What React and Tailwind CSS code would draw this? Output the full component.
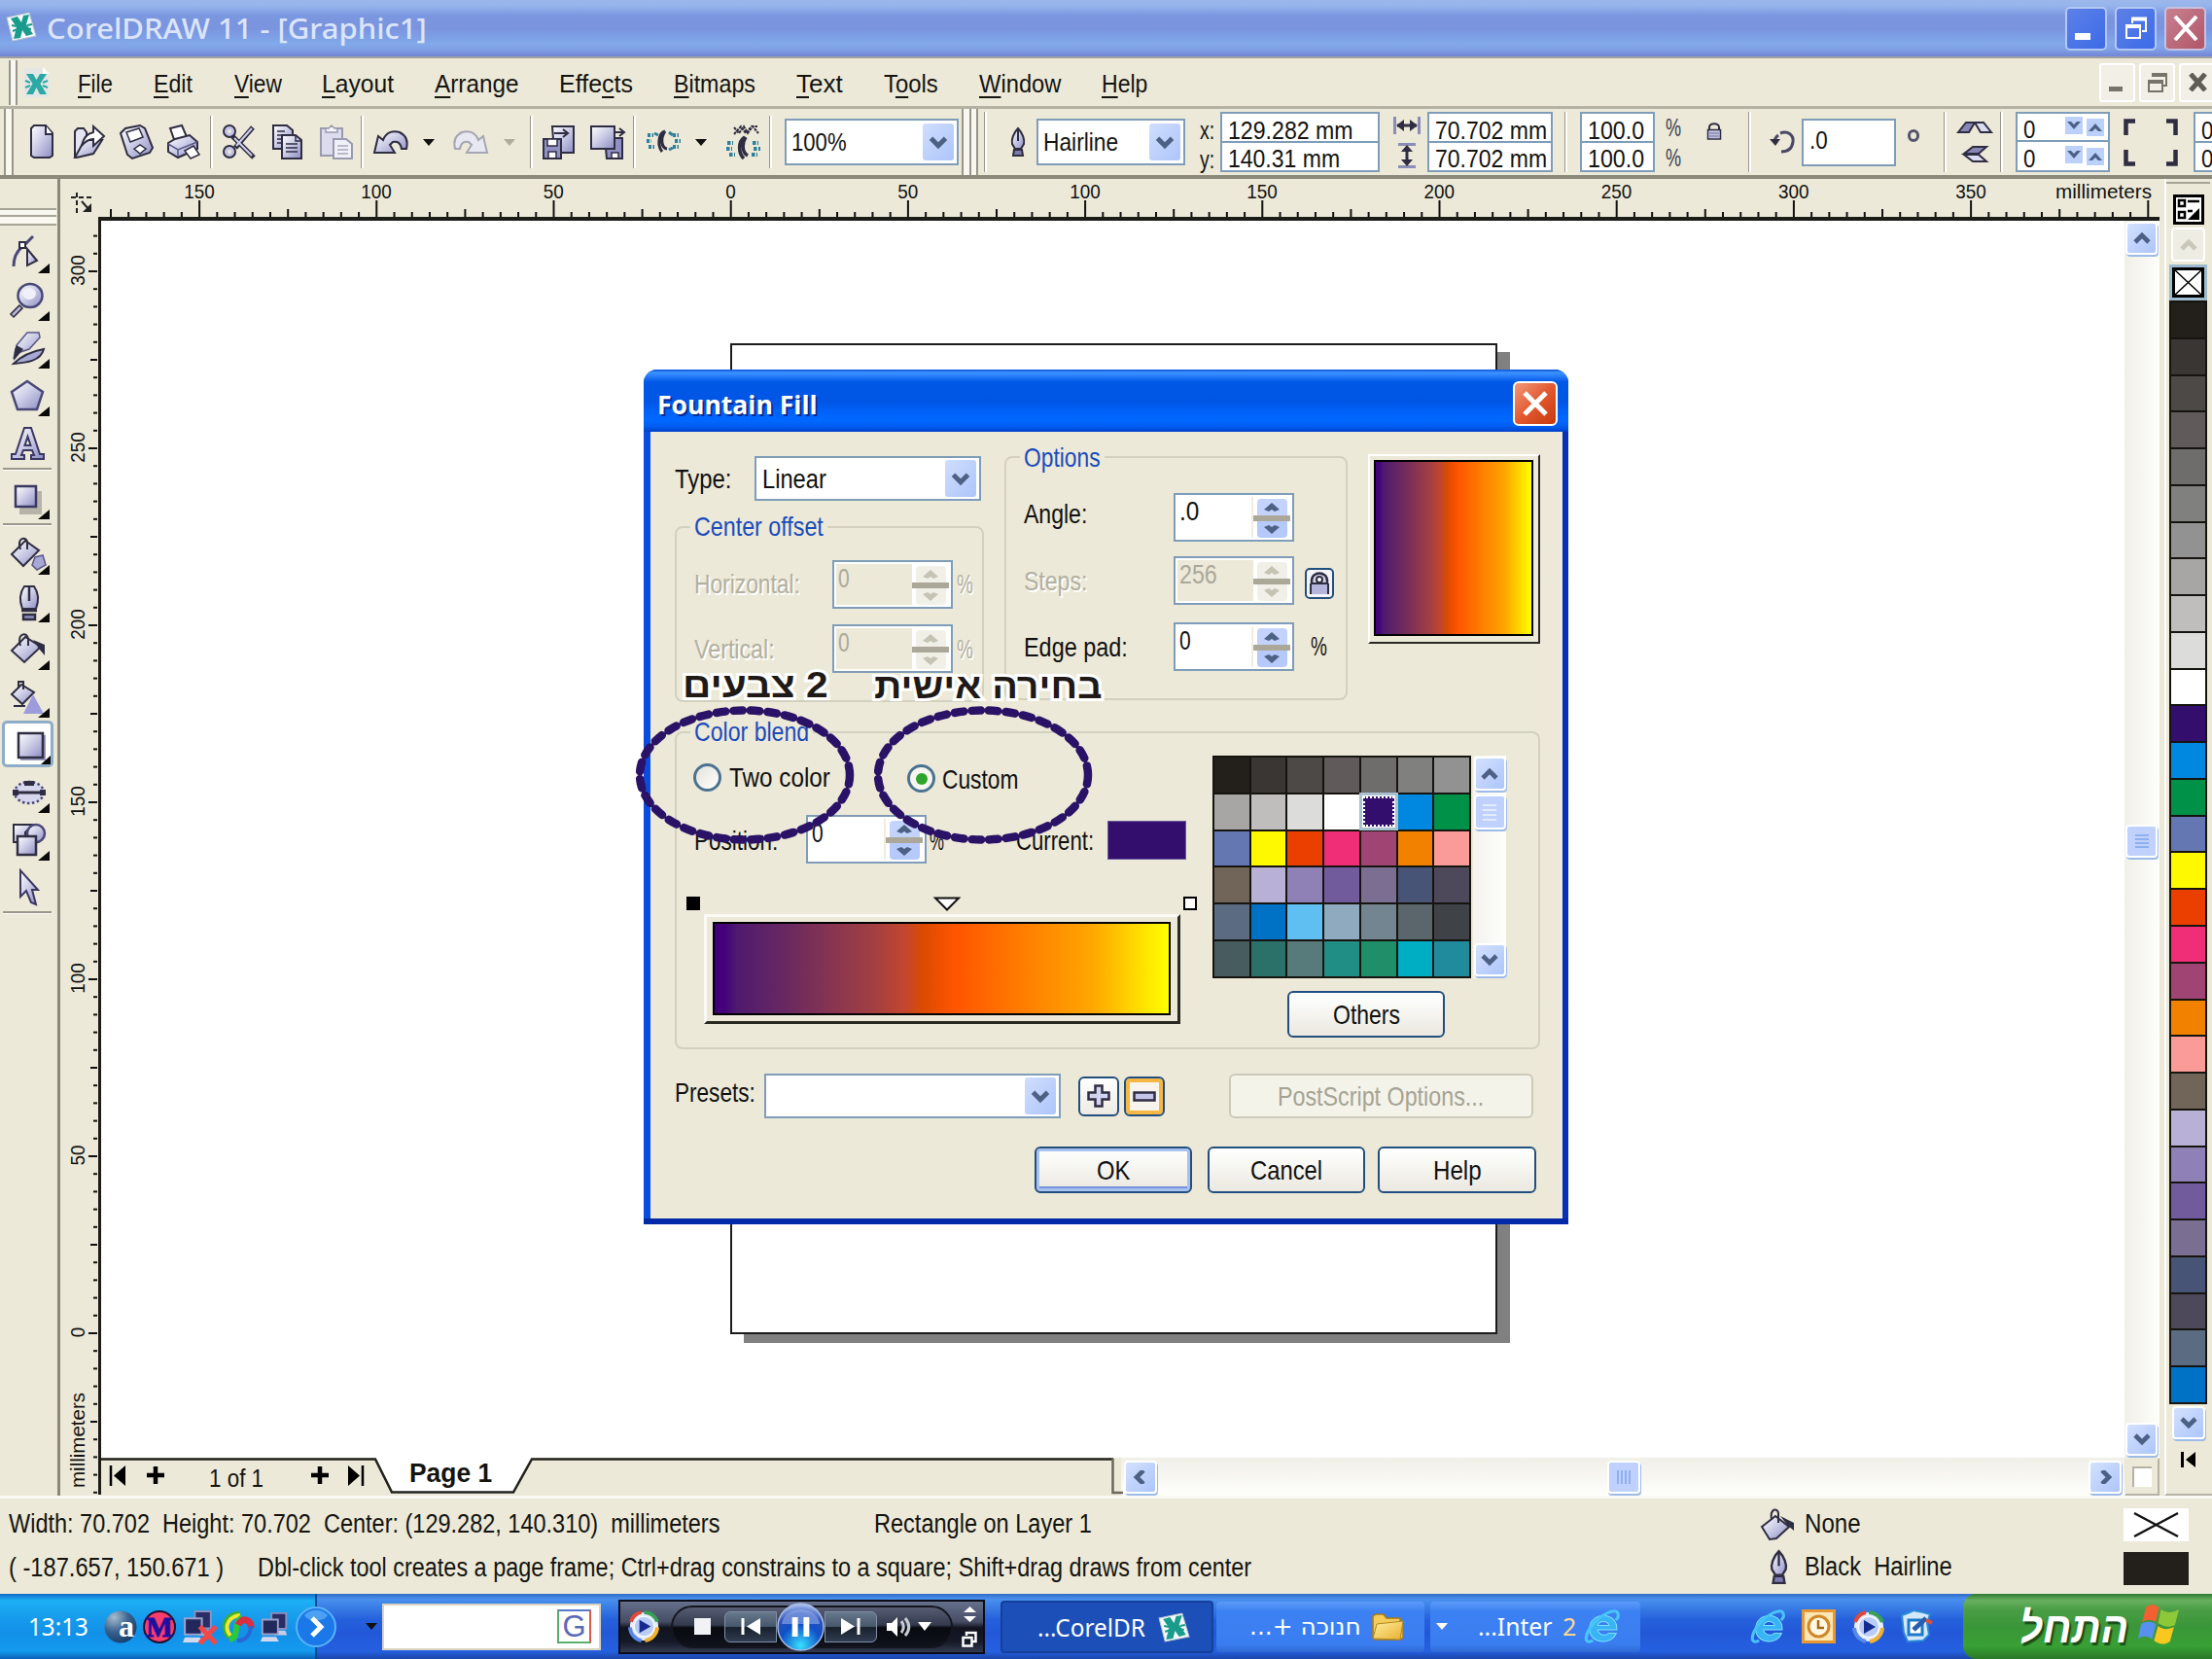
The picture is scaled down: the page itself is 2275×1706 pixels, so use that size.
import React, { useLayoutEffect, useRef } from "react";

/* Text squeezed or stretched horizontally to the width of its box. */
function Fit({ className = "", children, dir }) {
  const outer = useRef(null);
  const inner = useRef(null);
  useLayoutEffect(() => {
    const k = outer.current.clientWidth / inner.current.offsetWidth;
    inner.current.style.transform = `scaleX(${k})`;
  }, []);
  return (
    <span ref={outer} className={"block shrink-0 whitespace-nowrap text-left leading-none " + className}>
      <span ref={inner} dir={dir} className="inline-block origin-left whitespace-pre">
        {children}
      </span>
    </span>
  );
}

function Ico({ className, vb, children }) {
  return (
    <svg className={"block shrink-0 overflow-visible " + className} viewBox={vb} preserveAspectRatio="none" fill="none">
      {children}
    </svg>
  );
}

const L = "url(#lav)";
const D = "#2f2d42";

function Defs() {
  return (
    <svg className="absolute h-0 w-0">
      <defs>
        <linearGradient id="lav" x1="0" y1="0" x2="1" y2="1">
          <stop offset="0" stopColor="#ffffff" />
          <stop offset="0.45" stopColor="#cfcfe8" />
          <stop offset="1" stopColor="#8c8cc4" />
        </linearGradient>
        <radialGradient id="orb" cx="0.5" cy="0.9" r="0.9">
          <stop offset="0" stopColor="#37e0ff" />
          <stop offset="0.5" stopColor="#1050c8" />
          <stop offset="0.75" stopColor="#2a50b8" />
          <stop offset="1" stopColor="#b8ccf8" />
        </radialGradient>
        <radialGradient id="aball" cx="0.3" cy="0.2" r="0.9">
          <stop offset="0" stopColor="#a8bdd0" />
          <stop offset="0.5" stopColor="#3a628e" />
          <stop offset="1" stopColor="#123a68" />
        </radialGradient>
        <linearGradient id="fold" x1="0" y1="0" x2="1" y2="1">
          <stop offset="0" stopColor="#fff0a0" />
          <stop offset="1" stopColor="#e8b030" />
        </linearGradient>
      </defs>
    </svg>
  );
}

/* ---------- shared controls ---------- */

const Sep = ({ className }) => (
  <div className={"h-[54px] w-[3px] shrink-0 border-r-2 border-l border-r-white border-l-[#9a9788] " + className} />
);

const Grip = ({ className }) => (
  <div className={"shrink-0 border-x-2 border-[#98958a] bg-[#f8f7f0] " + className} />
);

const Chevron = ({ dir = "down", color = "#4d6185", className = "h-[14px] w-[18px]" }) => {
  const d = {
    down: "M2 3 L9 10 L16 3",
    up: "M2 11 L9 4 L16 11",
    left: "M12 0 L5 7 L12 14",
    right: "M6 0 L13 7 L6 14",
  }[dir];
  return (
    <svg className={"block shrink-0 " + className} viewBox="0 0 18 14" fill="none">
      <path d={d} stroke={color} strokeWidth="4.6" />
    </svg>
  );
};

const ScrollBtn = ({ dir, className = "" }) => (
  <div
    className={
      "flex shrink-0 items-center justify-center rounded-[4px] border-2 border-white bg-linear-to-br from-[#d3e1fe] to-[#adc5fa] shadow-[1px_2px_0_0_#9dbbe8] " +
      className
    }
  >
    <Chevron dir={dir} />
  </div>
);

const Combo = ({ className, children }) => (
  <div className={"flex shrink-0 items-center border-2 border-[#7f9db9] bg-white " + className}>
    <div className="grow">{children}</div>
    <div className="mr-[3px] flex h-[38px] w-[32px] items-center justify-center rounded-[3px] bg-linear-to-br from-[#d0defe] to-[#adc5fa]">
      <Chevron className="h-[15px] w-[20px]" />
    </div>
  </div>
);

function Spin({ text, w, off, className = "" }) {
  const c = off ? "#c4c3b4" : "#4d6185";
  return (
    <div className={"flex h-[50px] w-[124px] shrink-0 items-stretch border-2 border-[#7f9db9] bg-white p-[2px] text-[28px] " + className}>
      <div className={off ? "grow bg-[#ece9d8] pt-[1px] pl-[2px] text-[#aca899]" : "grow border-r-2 border-[#f0ede0] pt-[1px] pl-[2px]"}>
        <Fit className={w}>{text}</Fit>
      </div>
      <div className="flex w-[38px] flex-col items-center">
        <div className={off ? "mt-[2px] flex h-[17px] w-[31px] items-center justify-center rounded-t-[4px] bg-[#f1f0e8]" : "mt-[2px] flex h-[17px] w-[31px] items-center justify-center rounded-t-[4px] bg-[#c3d3fd]"}>
          <svg className="block h-[9px] w-[16px]" viewBox="0 0 16 9"><path d="M8 0 L16 7 L11 9 L8 7 L5 9 L0 7Z" fill={c} /></svg>
        </div>
        <div className="h-[6px] w-[38px] bg-[#aca899]" />
        <div className={off ? "flex h-[17px] w-[31px] items-center justify-center rounded-b-[4px] bg-[#f1f0e8]" : "flex h-[17px] w-[31px] items-center justify-center rounded-b-[4px] bg-[#b5cafb]"}>
          <svg className="block h-[9px] w-[16px]" viewBox="0 0 16 9"><path d="M8 9 L16 2 L11 0 L8 2 L5 0 L0 2Z" fill={c} /></svg>
        </div>
      </div>
    </div>
  );
}

const Btn = ({ className, children }) => (
  <div
    className={
      "flex h-[48px] shrink-0 items-center justify-center rounded-[6px] border-2 border-[#234f7e] bg-linear-to-b from-white via-[#f5f4ef] to-[#eae8e0] pt-[2px] text-[28px] " +
      className
    }
  >
    {children}
  </div>
);

/* ---------- logos ---------- */

const CorelLogo = ({ className }) => (
  <Ico className={className} vb="0 0 32 30">
    <path d="M1 5 L24 0 L31 24 L7 29Z" fill="#f6fafa" stroke="#b8c4d0" />
    <path d="M5 6 L12 4 L16 10 L18 3 L24 2 L21 12 L28 22 L21 24 L17 18 L15 26 L8 27 L11 15Z" fill="#1a9c8c" />
    <path d="M6 13 L11 14 M22 13 L27 12 M7 19 L12 17 M21 16 L26 17" stroke="#1a9c8c" strokeWidth="2" />
  </Ico>
);

const IE = ({ className }) => (
  <Ico className={className} vb="0 0 34 34">
    <path d="M31 20 H12.500 C13 25 20 27 23 23.500 H30.500 C28 30 22 32.500 17 32 C9 31.500 4.500 26 4.500 19 C4.500 11 10 5.500 18 5.500 C26 5.500 31.500 11 31 20Z M12.500 15.500 H23.500 C22.500 10 13.500 10 12.500 15.500Z" fill="#38b4f6" stroke="#7fe0ff" strokeWidth="1" fillRule="evenodd" />
    <path d="M8 31 C-2 36 0 24 8 14 C16 4 30 -3 32 3 C33 5 32 8 30 10" stroke="#49c4fa" strokeWidth="3" />
  </Ico>
);

const Wmp = ({ className }) => (
  <Ico className={className} vb="0 0 34 34">
    <circle cx="17" cy="17" r="15" fill="#e8eefc" />
    <path d="M3 12 A15 15 0 0 1 14 2" stroke="#e0483c" strokeWidth="4" />
    <path d="M17 2 A15 15 0 0 1 31 12" stroke="#38a058" strokeWidth="4" />
    <path d="M31 18 A15 15 0 0 1 18 32" stroke="#f0b030" strokeWidth="4" />
    <path d="M14 32 A15 15 0 0 1 2 18" stroke="#5888e8" strokeWidth="4" />
    <circle cx="17" cy="17" r="10.5" fill="#b8ccf6" stroke="#fff" />
    <path d="M12 10 L24 17 L12 24Z" fill="#142c90" />
  </Ico>
);

/* ---------- title and menu ---------- */

function TitleBar() {
  return (
    <div className="flex h-[58px] items-center bg-[linear-gradient(180deg,#9db6ea_0%,#96b4ec_10%,#7b97e0_28%,#7a94de_50%,#7d9ee6_64%,#82a9e9_78%,#7f9fe4_88%,#7285d6_100%)]">
      <CorelLogo className="mb-[3px] ml-[6px] h-[30px] w-[32px]" />
      <Fit className="ml-[10px] w-[391px] font-['Noto_Sans'] text-[28px] font-medium text-[#dbe5fa]">CorelDRAW 11 - [Graphic1]</Fit>
      <div className="mr-[6px] ml-auto flex gap-[8px]">
        <div className="flex h-[45px] w-[43px] items-end rounded-[5px] border-2 border-[#b4c8f4] bg-linear-to-br from-[#5d80e8] to-[#3c6be6] pb-[9px] pl-[8px]">
          <div className="h-[7px] w-[16px] bg-white" />
        </div>
        <div className="flex h-[45px] w-[43px] items-center justify-center rounded-[5px] border-2 border-[#b4c8f4] bg-linear-to-br from-[#5d80e8] to-[#3c6be6]">
          <svg className="h-[24px] w-[24px]" viewBox="0 0 24 24" fill="none" stroke="#fff">
            <path d="M8 7 V3 H22 V15 H18" strokeWidth="2" /><path d="M7 2.5 H23" strokeWidth="4" />
            <rect x="2" y="10" width="14" height="12" strokeWidth="2" /><path d="M1 10 H17" strokeWidth="4" />
          </svg>
        </div>
        <div className="flex h-[45px] w-[43px] items-center justify-center rounded-[5px] border-2 border-[#c8c0e0] bg-linear-to-br from-[#c88090] to-[#b05668]">
          <svg className="h-[26px] w-[26px]" viewBox="0 0 26 26"><path d="M2 1 L24 25 M24 1 L2 25" stroke="#fff" strokeWidth="4" /></svg>
        </div>
      </div>
    </div>
  );
}

const U = ({ children }) => <span className="underline decoration-2 underline-offset-[4px]">{children}</span>;

function MenuBar() {
  return (
    <div className="flex h-[54px] items-center border-t-2 border-b-[3px] border-t-[#a09fa0] border-b-[#b5b2a4] text-[26px]">
      <Grip className="ml-[9px] h-[46px] w-[9px]" />
      <Ico className="ml-[6px] h-[32px] w-[27px]" vb="0 0 27 32">
        <path d="M1 1 H20 L26 7 V31 H1Z" fill="#e4e6e6" />
        <path d="M20 0 V7 H27Z" fill="#fff" />
        <path d="M3 7 H10 L13.500 13 L17 7 H24 L17.500 17 L24 28 H17 L13.500 21 L10 28 H3 L9.500 17Z" fill="#2ba9a4" />
        <path d="M2 14 L7 16 M25 14 L20 16 M2 21 L7 19 M25 21 L20 19" stroke="#2ba9a4" strokeWidth="2" />
      </Ico>
      <div className="mt-[3px] flex">
        <Fit className="ml-[29px] w-[36px]"><U>F</U>ile</Fit>
        <Fit className="ml-[42px] w-[40px]"><U>E</U>dit</Fit>
        <Fit className="ml-[43px] w-[49px]"><U>V</U>iew</Fit>
        <Fit className="ml-[41px] w-[74px]"><U>L</U>ayout</Fit>
        <Fit className="ml-[42px] w-[87px]"><U>A</U>rrange</Fit>
        <Fit className="ml-[41px] w-[76px]">Effe<U>c</U>ts</Fit>
        <Fit className="ml-[42px] w-[84px]"><U>B</U>itmaps</Fit>
        <Fit className="ml-[42px] w-[48px]"><U>T</U>ext</Fit>
        <Fit className="ml-[42px] w-[56px]">T<U>o</U>ols</Fit>
        <Fit className="ml-[42px] w-[84px]"><U>W</U>indow</Fit>
        <Fit className="ml-[42px] w-[47px]"><U>H</U>elp</Fit>
      </div>
      <div className="-mr-[4px] ml-auto flex gap-[4px]">
        <div className="flex h-[40px] w-[37px] items-end rounded-[3px] border-2 border-white bg-[#f1efe6] pb-[9px] pl-[8px]">
          <div className="h-[5px] w-[14px] bg-[#76746a]" />
        </div>
        <div className="flex h-[40px] w-[37px] items-center justify-center rounded-[3px] border-2 border-white bg-[#f1efe6]">
          <svg className="h-[22px] w-[22px]" viewBox="0 0 22 22" fill="none" stroke="#76746a">
            <path d="M6 5 V3 H20 V14 H17" strokeWidth="2" /><path d="M5 3 H21" strokeWidth="4" />
            <rect x="2" y="10" width="14" height="10" strokeWidth="2" /><path d="M1 10 H17" strokeWidth="4" />
          </svg>
        </div>
        <div className="flex h-[40px] w-[38px] items-center justify-center rounded-[3px] border-2 border-white bg-[#f1efe6]">
          <svg className="h-[19px] w-[19px]" viewBox="0 0 19 19"><path d="M2 1 L17 18 M17 1 L2 18" stroke="#5f5d55" strokeWidth="5" /></svg>
        </div>
      </div>
    </div>
  );
}

/* ---------- toolbar ---------- */

const Tri = ({ className, color = "#111" }) => (
  <Ico className={"h-[7px] w-[12px] " + className} vb="0 0 12 7"><path d="M0 0 H12 L6 7Z" fill={color} /></Ico>
);

const Pair = ({ className, wa, wb, a, b }) => (
  <div className={"flex h-[62px] shrink-0 flex-col border-2 border-[#7f9db9] bg-white text-[26px] " + className}>
    <div className="flex h-[30px] items-center border-b-2 border-[#7f9db9] pt-[5px] pl-[6px]"><Fit className={wa}>{a}</Fit></div>
    <div className="flex h-[28px] items-center pt-[4px] pl-[6px]"><Fit className={wb}>{b}</Fit></div>
  </div>
);

const Nib = ({ className }) => (
  <Ico className={className} vb="0 0 16 30">
    <path d="M8 1 C13 6 15 13 14 17 L11 22 H5 L2 17 C1 13 3 6 8 1Z" fill={L} stroke={D} strokeWidth="2" />
    <path d="M8 2 V14" stroke={D} strokeWidth="2" />
    <path d="M4 23 H12 L13 29 H3Z" fill="#7a7ab0" stroke={D} strokeWidth="2" />
  </Ico>
);

const Lock = ({ className }) => (
  <Ico className={className} vb="0 0 16 18">
    <path d="M3 8 V5 C3 0 13 0 13 5 V8" stroke={D} strokeWidth="2" />
    <rect x="1.500" y="7.500" width="13" height="9.500" fill="#c4c4e4" stroke={D} strokeWidth="1.500" />
    <path d="M3 11 H13 M3 14 H13" stroke="#6a6a98" />
  </Ico>
);

function Toolbar() {
  return (
    <div className="flex h-[72px] items-center overflow-hidden border-b-4 border-[#8b897a] text-[26px]">
      <Grip className="ml-[4px] h-[68px] w-[10px]" />
      <Ico className="ml-[16px] h-[36px] w-[26px]" vb="0 0 26 36">
        <path d="M2 4 L5 1 H17 L24 9 V32 L21 34 H5 L2 32Z" fill={L} stroke={D} strokeWidth="2" />
        <path d="M17 1 V10 H24" fill="#fff" stroke={D} strokeWidth="2" />
      </Ico>
      <Ico className="ml-[19px] h-[36px] w-[33px]" vb="0 0 33 36">
        <path d="M2 34 V7 L5 4 H11 L14 8 V14" fill="#e4e4f2" stroke={D} strokeWidth="2" />
        <path d="M2 34 L12 16 H30 L21 30 L4 34Z" fill={L} stroke={D} strokeWidth="2" />
        <path d="M9 22 C11 12 16 9 21 8 V2 L32 12 L21 22 V15 C16 15 13 17 9 22Z" fill="#fff" stroke={D} strokeWidth="2" />
      </Ico>
      <Ico className="ml-[14px] h-[36px] w-[36px]" vb="0 0 36 36">
        <path d="M2 9 L7 4 L22 1 L27 4 L35 24 L32 29 L14 35 L9 31Z" fill={L} stroke={D} strokeWidth="2" />
        <path d="M8 8 L21 4 L25 13 L12 18Z" fill="#fff" stroke={D} strokeWidth="1.500" />
        <path d="M16 25 L22 21 L28 25 L22 30Z" fill="#fff" stroke={D} strokeWidth="1.500" />
      </Ico>
      <Ico className="ml-[13px] h-[36px] w-[35px]" vb="0 0 35 36">
        <path d="M4 4 L16 1 L22 15 L9 18Z" fill="#fff" stroke={D} strokeWidth="2" />
        <path d="M2 19 L9 15 L24 11 L32 18 V25 L12 34 L2 28Z" fill={L} stroke={D} strokeWidth="2" />
        <path d="M2 20 L12 26 L32 18 M12 26 V33" stroke="#5a588a" strokeWidth="1.500" />
        <path d="M19 27 L28 22 L34 31 L25 35Z" fill="#fff" stroke={D} strokeWidth="1.500" />
      </Ico>
      <Sep className="ml-[10px]" />
      <Ico className="ml-[9px] h-[36px] w-[35px]" vb="0 0 35 36">
        <path d="M11 12 L33 34 M14 24 L32 3" stroke={D} strokeWidth="5" />
        <path d="M13 14 L31 32 M15 22 L31 4" stroke="#d0d0ea" strokeWidth="2" />
        <circle cx="8" cy="7" r="6" stroke={D} strokeWidth="2" fill="#c4c4e2" /><circle cx="8" cy="7" r="2" fill="#ece9d8" />
        <circle cx="8" cy="28" r="6" stroke={D} strokeWidth="2" fill="#c4c4e2" /><circle cx="8" cy="28" r="2" fill="#ece9d8" />
      </Ico>
      <Ico className="ml-[17px] h-[36px] w-[31px]" vb="0 0 31 36">
        <path d="M1 1 H15 L21 6 V25 H1Z" fill={L} stroke={D} strokeWidth="2" />
        <path d="M5 7 H13 M5 11 H10 M5 15 H10 M5 19 H10" stroke={D} strokeWidth="1.500" />
        <path d="M10 11 H24 L30 16 V35 H10Z" fill={L} stroke={D} strokeWidth="2" />
        <path d="M24 11 V17 H30 M14 20 H26 M14 24 H26 M14 28 H26" stroke={D} strokeWidth="1.500" />
      </Ico>
      <Ico className="ml-[18px] h-[36px] w-[34px]" vb="0 0 34 36">
        <path d="M1 4 H23 V32 H1Z" fill="#dcdcee" stroke="#9a9aae" strokeWidth="2" />
        <path d="M6 8 V4 H9 L12 1 L15 4 H18 V8Z" fill="#f4f4fa" stroke="#9a9aae" strokeWidth="1.500" />
        <path d="M14 15 H27 L33 20 V35 H14Z" fill="#f0f0f8" stroke="#9a9aae" strokeWidth="2" />
        <path d="M18 22 H29 M18 26 H29 M18 30 H29" stroke="#a8a8bc" strokeWidth="1.500" />
      </Ico>
      <Sep className="ml-[8px]" />
      <Ico className="ml-[10px] h-[26px] w-[36px]" vb="0 0 36 26">
        <path d="M1 24 L5 7 L10 11 C13 3 20 1 27 3 C33 6 36 12 34 20 L29 20 C28 14 25 12 20 13 L17 16 L22 24Z" fill={L} stroke={D} strokeWidth="2" />
      </Ico>
      <Tri className="ml-[15px]" />
      <Ico className="ml-[19px] h-[26px] w-[36px]" vb="0 0 36 26">
        <path d="M35 24 L31 7 L26 11 C23 3 16 1 9 3 C3 6 0 12 2 20 L7 20 C8 14 11 12 16 13 L19 16 L14 24Z" fill="#e8e8f2" stroke="#a6a6b4" strokeWidth="2" />
      </Ico>
      <Tri className="ml-[16px]" color="#b0ad9c" />
      <Sep className="ml-[15px]" />
      <Ico className="ml-[10px] h-[36px] w-[34px]" vb="0 0 34 36">
        <path d="M10 2 H32 V29 H12Z" fill={L} stroke={D} strokeWidth="2" />
        <path d="M12 9 H25 M21 5 L26 9 L21 13" stroke={D} strokeWidth="2" />
        <path d="M1 15 H19 V35 H1Z" fill="#9090c4" stroke={D} strokeWidth="2" />
        <path d="M5 15 H15 V22 H5Z" fill="#fff" stroke={D} strokeWidth="1.500" /><path d="M6 34 V28 H14 V34" fill="#fff" stroke={D} strokeWidth="1.500" />
      </Ico>
      <Ico className="ml-[15px] h-[36px] w-[36px]" vb="0 0 36 36">
        <path d="M15 14 H33 V35 H17Z" fill="#9090c4" stroke={D} strokeWidth="2" />
        <path d="M22 34 V29 H29 V34" fill="#fff" stroke={D} strokeWidth="1.500" />
        <path d="M1 2 H25 V25 H1Z" fill={L} stroke={D} strokeWidth="2" />
        <path d="M24 8 H35 M30 4 L35 8 L30 12" stroke={D} strokeWidth="2" />
      </Ico>
      <Sep className="ml-[8px]" />
      <Ico className="ml-[10px] h-[24px] w-[36px]" vb="0 0 36 24">
        <path d="M2 5 H8 M1 11 H6 M3 17 H9 M28 5 H34 M30 11 H36 M28 17 H34" stroke="#2e7f9c" strokeWidth="4" strokeDasharray="3 1.500" />
        <path d="M20 1 C13 3 12 16 17 22 M20 1 C15 8 16 18 22 19" stroke={D} strokeWidth="3" />
        <path d="M9 3 L13 5 M24 2 L28 5 M24 20 L28 18" stroke="#2e7f9c" strokeWidth="3" />
      </Ico>
      <Tri className="ml-[15px]" />
      <Ico className="ml-[19px] h-[38px] w-[36px]" vb="0 0 36 38">
        <path d="M9 4 L14 10 L19 3 L23 10 L28 3 L34 10 M9 11 L16 3 L21 10 L27 3 L33 3" stroke={D} strokeWidth="2" strokeDasharray="3 1" />
        <path d="M20 14 C13 18 13 30 19 36 M21 14 C17 20 17 30 23 33" stroke={D} strokeWidth="3.500" />
        <path d="M2 20 H8 M1 26 H7 M4 32 H10 M28 20 H34 M29 26 H36 M27 32 H33" stroke="#2e7f9c" strokeWidth="4" strokeDasharray="3.500 1.500" />
      </Ico>
      <Sep className="ml-[9px]" />
      <Combo className="ml-[13px] h-[48px] w-[179px]"><Fit className="ml-[5px] w-[57px]">100%</Fit></Combo>
      <div className="ml-[3px] flex h-[68px] w-[17px] shrink-0 justify-between border-x-2 border-[#98958a] bg-[#f8f7f0]"><div className="ml-[6px] w-[2px] bg-[#98958a]" /></div>
      <Sep className="ml-[6px] h-[62px]" />
      <Nib className="ml-[24px] h-[30px] w-[16px]" />
      <Combo className="ml-[11px] h-[48px] w-[153px]"><Fit className="ml-[5px] w-[77px]">Hairline</Fit></Combo>
      <div className="mt-[5px] ml-[15px] flex shrink-0 flex-col gap-[4px]"><Fit className="w-[15px]">x:</Fit><Fit className="w-[15px]">y:</Fit></div>
      <Pair className="ml-[6px] w-[164px]" wa="w-[129px]" wb="w-[115px]" a="129.282 mm" b="140.31 mm" />
      <div className="ml-[14px] flex w-[28px] shrink-0 flex-col items-center gap-[9px]">
        <Ico className="h-[18px] w-[28px]" vb="0 0 28 18"><path d="M1.500 0 V18 M26.500 0 V18" stroke="#8c8cb8" strokeWidth="3" /><path d="M4 9 H24" stroke={D} strokeWidth="3" /><path d="M3 9 L11 3 V15Z M25 9 L17 3 V15Z" fill={D} /></Ico>
        <Ico className="h-[26px] w-[18px]" vb="0 0 18 26"><path d="M0 1.500 H18 M0 24.500 H18" stroke="#8c8cb8" strokeWidth="3" /><path d="M9 4 V22" stroke={D} strokeWidth="3" /><path d="M9 2 L3 9 H15Z M9 24 L3 17 H15Z" fill={D} /></Ico>
      </div>
      <Pair className="ml-[7px] w-[129px]" wa="w-[115px]" wb="w-[115px]" a="70.702 mm" b="70.702 mm" />
      <Sep className="ml-[12px] h-[62px]" />
      <Pair className="ml-[13px] w-[77px]" wa="w-[58px]" wb="w-[58px]" a="100.0" b="100.0" />
      <div className="ml-[11px] flex shrink-0 flex-col gap-[5px] text-[#3c3a4c]"><Fit className="w-[16px]">%</Fit><Fit className="w-[16px]">%</Fit></div>
      <Lock className="mb-[22px] ml-[26px] h-[18px] w-[16px]" />
      <Sep className="ml-[27px] h-[62px]" />
      <Ico className="ml-[19px] h-[24px] w-[26px]" vb="0 0 26 24"><path d="M11 3 C19 0 25 5 24 12 C23 19 18 22 12 22 M5 13 C5 10 6 7 9 5" stroke="#4a4866" strokeWidth="3" /><path d="M0 9 H11 L6 16Z" fill={D} /></Ico>
      <div className="ml-[7px] h-[49px] w-[97px] shrink-0 border-2 border-[#7f9db9] bg-white pt-[7px] pl-[6px]"><Fit className="w-[19px]">.0</Fit></div>
      <div className="mb-[14px] ml-[12px] h-[13px] w-[12px] shrink-0 rounded-full border-[3px] border-[#55536e]" />
      <Sep className="ml-[25px] h-[62px]" />
      <div className="ml-[11px] flex w-[36px] shrink-0 flex-col items-center gap-[13px]">
        <Ico className="h-[12px] w-[36px]" vb="0 0 36 12"><path d="M1 11 L9 1 H18 L12 11Z" fill="#8886b4" stroke={D} strokeWidth="2" /><path d="M35 11 L27 1 H18 L24 11Z" fill="#dcdcf0" stroke={D} strokeWidth="2" /></Ico>
        <Ico className="h-[17px] w-[25px]" vb="0 0 25 17"><path d="M24 1 H10 L1 8 H16Z" fill="#8886b4" stroke={D} strokeWidth="2" /><path d="M24 16 H10 L1 9 H16Z" fill="#dcdcf0" stroke={D} strokeWidth="2" /></Ico>
      </div>
      <Sep className="ml-[8px] h-[62px]" />
      <div className="ml-[13px] flex h-[62px] w-[97px] shrink-0 flex-col border-2 border-[#7f9db9] bg-white">
        <MiniSpin className="border-b-2" /><MiniSpin className="border-b-0" />
      </div>
      <div className="ml-[14px] flex w-[12px] shrink-0 flex-col gap-[15px]">
        <Ico className="h-[17px] w-[12px]" vb="0 0 12 17"><path d="M2.500 17 V2.500 H12" stroke={D} strokeWidth="4.500" /></Ico>
        <Ico className="h-[17px] w-[12px]" vb="0 0 12 17"><path d="M2.500 0 V14.500 H12" stroke={D} strokeWidth="4.500" /></Ico>
      </div>
      <div className="ml-[32px] flex w-[12px] shrink-0 flex-col gap-[15px]">
        <Ico className="h-[17px] w-[12px]" vb="0 0 12 17"><path d="M0 2.500 H9.500 V17" stroke={D} strokeWidth="4.500" /></Ico>
        <Ico className="h-[17px] w-[12px]" vb="0 0 12 17"><path d="M0 14.500 H9.500 V0" stroke={D} strokeWidth="4.500" /></Ico>
      </div>
      <Pair className="ml-[16px] w-[60px]" wa="w-[12px]" wb="w-[12px]" a="0" b="0" />
    </div>
  );
}

const MiniSpin = ({ className }) => (
  <div className={"flex h-[29px] items-center border-[#7f9db9] pl-[6px] " + className}>
    <Fit className="mt-[4px] w-[12px]">0</Fit>
    <div className="mb-[3px] ml-[31px] flex h-[18px] w-[18px] items-center justify-center bg-[#bcd0fc]"><svg className="h-[10px] w-[14px]" viewBox="0 0 14 10"><path d="M0 1 L4 1 L7 4 L10 1 H14 L7 9Z" fill="#4d6185" /></svg></div>
    <div className="mt-[1px] ml-[4px] flex h-[18px] w-[18px] items-center justify-center bg-[#bcd0fc]"><svg className="h-[10px] w-[14px]" viewBox="0 0 14 10"><path d="M0 9 L4 9 L7 6 L10 9 H14 L7 1Z" fill="#4d6185" /></svg></div>
  </div>
);

/* ---------- toolbox ---------- */

const Fly = () => <path d="M51 46 H39 L51 36Z" fill="#0a0a0a" />;

const Cell = ({ children, className = "", fly = true }) => (
  <div className={"h-[49px] w-[58px] shrink-0 " + className}>
    <svg className="block h-[49px] w-[58px]" viewBox="0 0 58 49" fill="none">{children}{fly && <Fly />}</svg>
  </div>
);

const HLine = ({ className = "" }) => <div className={"mx-[3px] h-[3px] w-[50px] shrink-0 border-t-2 border-b border-t-[#9a9788] border-b-white " + className} />;

function Toolbox() {
  return (
    <div className="flex w-[59px] shrink-0 flex-col">
      <div className="mt-[30px] h-[18px] w-[58px] border-y-2 border-[#a8a598] bg-[#f8f7f0] pt-[5px]"><div className="h-[2px] bg-[#a8a598]" /></div>
      <div className="h-[3px]" />
      <Cell><path d="M14 39 C14 30 17 23 24 18 L34 8" stroke="#4a4878" strokeWidth="3" /><rect x="20" y="14" width="6" height="6" fill="#fff" stroke={D} strokeWidth="2" /><path d="M28 21 V38 L38 33Z" fill={L} stroke={D} strokeWidth="2" /></Cell>
      <Cell><path d="M22 31 L12 41" stroke={D} strokeWidth="6" /><path d="M21 32 L13 40" stroke="#b8b8dc" strokeWidth="2.500" /><ellipse cx="31" cy="20" rx="12.500" ry="12" fill={L} stroke="#4a4878" strokeWidth="2.500" /><ellipse cx="30" cy="18" rx="7" ry="6" fill="#f0f0fa" /></Cell>
      <Cell><path d="M17 22 L28 9 H40 L41 14 L30 26 L18 30 L14 36Z" fill={L} stroke="#5a5888" strokeWidth="1.500" /><path d="M17 22 L24 26 L14 38 L15 27Z" fill={D} /><path d="M14 41 C22 33 34 28 45 26 C42 38 28 40 14 41Z" fill="#a8a8d4" stroke={D} strokeWidth="2" /></Cell>
      <Cell><path d="M28 10 L44 21 L38 39 H18 L12 21Z" fill={L} stroke="#4a4878" strokeWidth="2.500" /></Cell>
      <Cell fly={false}><path d="M12 41 V36 H16 L25 9 H32 L41 36 H45 V41 H32 V37 H35 L33 32 H24 L22 37 H25 V41Z M25.500 27 H31.500 L28.500 18Z" fill={L} stroke="#3a3862" strokeWidth="2" fillRule="evenodd" /></Cell>
      <HLine className="mt-[1px] mb-[4px]" />
      <Cell><path d="M20 17 H43 V41 H20Z" fill="#b6b4a8" /><rect x="16" y="12" width="21" height="21" fill={L} stroke="#3a3862" strokeWidth="2.500" /></Cell>
      <HLine className="mt-[1px] mb-[4px]" />
      <Cell><path d="M12 25 L26 11 L40 21 L24 37Z" fill={L} stroke={D} strokeWidth="2" /><path d="M21 20 C17 8 26 6 28 12 V20" stroke={D} strokeWidth="2" /><path d="M36 28 L44 26 L47 36 L38 41 L33 36Z" fill="#a8a8d4" stroke="#5a5888" strokeWidth="1.500" /></Cell>
      <Cell><path d="M25 9 H35 C40 16 40 24 37 32 H23 C20 24 20 16 25 9Z" fill={L} stroke={D} strokeWidth="2" /><path d="M30 10 V24" stroke={D} strokeWidth="2.500" /><path d="M22 34 H38 M24 38 H36 V43 H24Z" fill="#9090c4" stroke={D} strokeWidth="2.500" /></Cell>
      <Cell><path d="M12 26 L26 12 L42 22 L25 38Z" fill={L} stroke={D} strokeWidth="2" /><path d="M21 21 C17 8 28 6 29 14 V21" stroke={D} strokeWidth="2" /><path d="M34 15 L46 20 V31 L40 24Z" fill={D} /></Cell>
      <Cell><path d="M12 22 L22 12 L35 20 L23 32Z" fill={L} stroke={D} strokeWidth="2" /><path d="M19 16 V9 H24 V17" stroke={D} strokeWidth="2" /><path d="M14 34 H26" stroke={D} strokeWidth="2" /><path d="M34 22 L45 42 H24Z" fill="#9c9cdc" /></Cell>
      <div className="ml-[2px] h-[48px] w-[53px] shrink-0 rounded-[5px] border-[3px] border-[#8fadc6] bg-white">
        <svg className="block h-[42px] w-[47px]" viewBox="0 0 47 42" fill="none"><path d="M16 12 H42 V38 H16Z" fill="#9a9ac0" /><rect x="14" y="10" width="25" height="25" fill={L} stroke={D} strokeWidth="2.500" /><path d="M48 42 H37 L48 32Z" fill="#0a0a0a" /></svg>
      </div>
      <div className="h-[1px]" />
      <Cell><ellipse cx="30" cy="25" rx="15" ry="11" fill="#d6d6ec" stroke="#4a4878" strokeWidth="2.500" strokeDasharray="2.500 2.500" /><path d="M15 25 H45" stroke={D} strokeWidth="3" /><path d="M13 22 H19 V28 H13Z M41 22 H47 V28 H41Z M25 13 H35 V18 H25Z" fill={D} /></Cell>
      <Cell><path d="M14 9 H34 L26 17 V27 H14Z" fill={L} stroke={D} strokeWidth="2" /><circle cx="37" cy="18" r="9" fill={L} stroke="#4a4878" strokeWidth="2.500" /><rect x="18" y="21" width="19" height="19" fill={L} stroke={D} strokeWidth="2.500" /></Cell>
      <Cell fly={false}><path d="M21 7 V34 L27 28 L32 40 L37 42 L33 27 H39Z" fill={L} stroke="#3a3862" strokeWidth="2" /></Cell>
      <HLine />
    </div>
  );
}

/* ---------- rulers, canvas, palette ---------- */

const rulerX = Array.from({ length: 116 }, (_, i) => i);
const rulerY = Array.from({ length: 76 }, (_, i) => i - 36);

function TopRuler() {
  return (
    <svg className="block h-[43px] w-[2159px] shrink-0" viewBox="62 184 2159 43">
      {rulerX.map((i) => {
        const x = 114 + i * 18.22;
        const major = i % 10 === 5;
        return x < 2215 ? <rect key={i} x={x - 1} y={major ? 206 : i % 10 === 0 ? 215 : 218} width="2" height={major ? 17 : i % 10 === 0 ? 8 : 5} fill="#111" /> : null;
      })}
      {["150", "100", "50", "0", "50", "100", "150", "200", "250", "300", "350"].map((t, i) => (
        <text key={i} x={751.5 + (i - 3) * 182.2} y="204" textAnchor="middle" fontSize="21" fill="#111" textLength={t.length * 10.5} lengthAdjust="spacingAndGlyphs">{t}</text>
      ))}
      <text x="2114" y="204" fontSize="21" fill="#111" textLength="99" lengthAdjust="spacingAndGlyphs">millimeters</text>
      <rect x="101" y="223" width="2120" height="4" fill="#1c1c18" />
      <g stroke="#222" strokeWidth="2" fill="none">
        <path d="M79 198 V220 M73 203 H97" strokeDasharray="5 3" />
        <path d="M84 207 L92 216" />
      </g>
      <path d="M94 209 V218 H85Z" fill="#222" />
    </svg>
  );
}

function SideRuler() {
  return (
    <svg className="block h-[1311px] w-[42px] shrink-0" viewBox="62 227 42 1311">
      {rulerY.map((i) => {
        const y = 825 + i * 18.2;
        const major = i % 10 === 0;
        return y > 240 && y < 1537 ? <rect key={i} x={major ? 91 : i % 5 === 0 ? 93 : 96} y={y - 1} width={major ? 9 : i % 5 === 0 ? 7 : 4} height="2" fill="#111" /> : null;
      })}
      {["300", "250", "200", "150", "100", "50", "0"].map((t, i) => (
        <text key={t} transform={`translate(87 ${278 + i * 182}) rotate(-90)`} textAnchor="middle" fontSize="21" fill="#111" textLength={t.length * 10.5} lengthAdjust="spacingAndGlyphs">{t}</text>
      ))}
      <text transform="translate(87 1530) rotate(-90)" fontSize="21" fill="#111" textLength="98" lengthAdjust="spacingAndGlyphs">millimeters</text>
      <rect x="101" y="227" width="3" height="1310" fill="#1c1c18" />
    </svg>
  );
}

function PageTabs() {
  return (
    <div className="flex h-[39px]">
      <div className="relative flex h-[39px] w-[1041px] shrink-0 items-center">
        <svg className="absolute inset-0 h-[39px] w-[1051px]" viewBox="0 0 1051 39" fill="none">
          <path d="M282 0 L299 37 H424 L444 0Z" fill="#fff" />
          <path d="M0 1.500 H282 L299 35.500 H424 L443 1.500 H1041" stroke="#22221c" strokeWidth="2.500" />
          <path d="M1040.500 1 V36 H1051" stroke="#6a685c" strokeWidth="2.500" />
        </svg>
        <Ico className="relative -mt-[3px] ml-[9px] h-[21px] w-[16px]" vb="0 0 16 21"><path d="M1 0 V21" stroke="#000" strokeWidth="2.500" /><path d="M16 0 V21 L4 10.500Z" fill="#000" /></Ico>
        <Ico className="relative -mt-[3px] ml-[22px] h-[18px] w-[18px]" vb="0 0 18 18"><path d="M9 0 V18 M0 9 H18" stroke="#000" strokeWidth="4.500" /></Ico>
        <Fit className="relative ml-[46px] w-[56px] pt-[3px] text-[26px]">1 of 1</Fit>
        <Ico className="relative -mt-[3px] ml-[49px] h-[18px] w-[18px]" vb="0 0 18 18"><path d="M9 0 V18 M0 9 H18" stroke="#000" strokeWidth="4.500" /></Ico>
        <Ico className="relative -mt-[3px] ml-[20px] h-[21px] w-[16px]" vb="0 0 16 21"><path d="M15 0 V21" stroke="#000" strokeWidth="2.500" /><path d="M0 0 V21 L12 10.500Z" fill="#000" /></Ico>
        <Fit className="relative mb-[6px] ml-[47px] w-[85px] text-[27px] font-bold">Page 1</Fit>
      </div>
      <div className="ml-[8px] flex h-[39px] grow items-center bg-linear-to-b from-[#f0efe8] to-[#fefefb]">
        <ScrollBtn dir="left" className="ml-[3px] h-[34px] w-[34px]" />
        <div className="ml-[463px] flex h-[34px] w-[34px] shrink-0 items-center justify-center gap-[2px] rounded-[4px] border-2 border-white bg-[#bfd1fc] shadow-[1px_2px_0_0_#9dbbe8]">
          <div className="h-[14px] w-[2px] bg-[#8fb0f0]" /><div className="h-[14px] w-[2px] bg-[#8fb0f0]" /><div className="h-[14px] w-[2px] bg-[#8fb0f0]" /><div className="h-[14px] w-[2px] bg-[#8fb0f0]" />
        </div>
        <ScrollBtn dir="right" className="mr-[3px] ml-auto h-[34px] w-[34px]" />
      </div>
      <div className="flex h-[39px] w-[36px] items-center justify-center border-2 border-[#ece9d8] border-r-[#b5b2a4] border-b-[#b5b2a4]">
        <div className="h-[21px] w-[20px] border-t-2 border-l-2 border-[#b5b2a4] bg-white" />
      </div>
    </div>
  );
}

function Workspace() {
  return (
    <div className="flex w-[2162px] shrink-0 flex-col border-l-[3px] border-[#8b897a]">
      <TopRuler />
      <div className="flex">
        <SideRuler />
        <div className="flex grow flex-col">
          <div className="flex h-[1272px]">
            <div className="relative w-[2081px] shrink-0 bg-white">
              <div className="absolute top-[135px] left-[661px] h-[1019px] w-[788px] bg-[#808080]" />
              <div className="absolute top-[126px] left-[647px] h-[1019px] w-[789px] border-2 border-[#1c1c1c] bg-white" />
            </div>
            <div className="flex w-[36px] shrink-0 flex-col items-center bg-linear-to-r from-[#f0efe8] to-[#fefefb] pr-[1px]">
              <ScrollBtn dir="up" className="mt-[1px] h-[34px] w-[33px]" />
              <div className="mt-[586px] flex h-[34px] w-[33px] flex-col items-center justify-center gap-[2px] rounded-[4px] border-2 border-white bg-[#bfd1fc] shadow-[1px_2px_0_0_#9dbbe8]">
                <div className="h-[2px] w-[14px] bg-[#8fb0f0]" /><div className="h-[2px] w-[14px] bg-[#8fb0f0]" /><div className="h-[2px] w-[14px] bg-[#8fb0f0]" /><div className="h-[2px] w-[14px] bg-[#8fb0f0]" />
              </div>
              <ScrollBtn dir="down" className="mt-auto mb-[2px] h-[34px] w-[33px]" />
            </div>
          </div>
          <PageTabs />
        </div>
      </div>
    </div>
  );
}

const swatches = [
  "bg-[#23201c]", "bg-[#3a3633]", "bg-[#4d4946]", "bg-[#605b5a]", "bg-[#6e6d6c]", "bg-[#80807f]", "bg-[#929292]",
  "bg-[#a7a6a5]", "bg-[#bfbebd]", "bg-[#dcdcdb]", "bg-[#ffffff]", "bg-[#340e6c]", "bg-[#0087df]", "bg-[#009149]",
  "bg-[#6577b3]", "bg-[#fff900]", "bg-[#eb3f00]", "bg-[#f02e77]", "bg-[#a04573]", "bg-[#f38100]", "bg-[#fa9b98]",
  "bg-[#716458]", "bg-[#b9b0d6]", "bg-[#8f80b5]", "bg-[#725b9c]", "bg-[#7a6f92]", "bg-[#485475]", "bg-[#4d495a]",
  "bg-[#5b6b82]", "bg-[#0072c5]", "bg-[#5fbef2]", "bg-[#8fa9be]", "bg-[#728590]", "bg-[#5a666b]", "bg-[#3f4347]",
  "bg-[#465c5e]", "bg-[#2b7069]", "bg-[#577a7b]", "bg-[#208e84]", "bg-[#1f8f6a]", "bg-[#00aec4]", "bg-[#218b9e]",
];

function PaletteBar() {
  return (
    <div className="ml-[5px] flex h-[1354px] w-[49px] flex-col items-center border-b-2 border-l-2 border-[#b5b2a4] border-l-white pr-[2px]">
      <div className="h-[5px] w-full border-b-2 border-[#a8a598]" />
      <Ico className="mt-[11px] h-[31px] w-[32px]" vb="0 0 32 31">
        <rect x="1.500" y="1.500" width="29" height="28" fill="#fff" stroke="#000" strokeWidth="3" />
        <rect x="6" y="6" width="6" height="6" stroke="#000" strokeWidth="2.500" /><rect x="6" y="18" width="6" height="6" stroke="#000" strokeWidth="2.500" />
        <path d="M15 7 H27 M15 17 H20" stroke="#000" strokeWidth="2.500" /><path d="M27 14 V26 H15Z" fill="#000" />
      </Ico>
      <div className="mt-[3px] flex h-[35px] w-[35px] items-center justify-center rounded-[4px] border-2 border-white bg-[#eeede4]"><Chevron dir="up" color="#c9c7ba" /></div>
      <div className="mt-[3px] h-[37px] w-[39px] border-[3px] border-[#9dbace]">
        <svg className="block h-[31px] w-[33px]" viewBox="0 0 33 31"><rect x="1.500" y="1.500" width="30" height="28" fill="#fff" stroke="#000" strokeWidth="3" /><path d="M2 2 L31 29 M31 2 L2 29" stroke="#000" strokeWidth="1.500" /></svg>
      </div>
      <div className="flex h-[1135px] w-[39px] flex-col gap-[2px] border-2 border-[#16140f] bg-[#16140f]">
        {swatches.slice(0, 30).map((c) => <div key={c} className={"min-h-0 flex-1 " + c} />)}
      </div>
      <ScrollBtn dir="down" className="mt-[2px] h-[34px] w-[34px]" />
      <Ico className="mt-[13px] h-[16px] w-[15px]" vb="0 0 15 16"><path d="M1.500 0 V16" stroke="#000" strokeWidth="3" /><path d="M15 0 V16 L5 8Z" fill="#000" /></Ico>
    </div>
  );
}

/* ---------- dialog ---------- */

const Legend = ({ children, className }) => (
  <div className={"ml-[14px] flex h-[32px] items-center self-start bg-[#ece9d8] px-[4px] text-[28px] text-[#1b4bbc] " + className}>{children}</div>
);

const off = "text-[#b3b0a0] [text-shadow:2px_2px_0_#fff]";
const group = "flex shrink-0 flex-col rounded-[8px] border-2 border-[#d2d1c0] ";
const blend =
  "bg-[linear-gradient(90deg,#41007a_0%,#43007a_2%,#4f1a6f_5%,#6d2a5f_17%,#a33f42_35%,#c3462e_42%,#dc4b00_46%,#ff5500_53%,#ff7800_66%,#ffa600_83%,#ffe000_94%,#ffff00_100%)]";

function Dialog() {
  return (
    <div className="absolute top-[380px] left-[662px] flex h-[879px] w-[951px] flex-col rounded-t-[14px] border-b-[6px] border-[#0429a8] bg-[linear-gradient(90deg,#0a4ce0_0%,#0a4ce0_50%,#0830b8_100%)] text-[28px] text-[#111]">
      <div className="flex h-[64px] shrink-0 items-center rounded-t-[14px] bg-[linear-gradient(180deg,#0a50d8_0%,#3c94ff_5%,#2a80fa_10%,#0058e6_20%,#0055e5_50%,#0062f8_68%,#0068ff_82%,#005cf0_92%,#0040c8_100%)]">
        <Fit className="mt-[6px] ml-[14px] w-[165px] font-['Open_Sans'] text-[27px] font-bold text-white [text-shadow:2px_2px_0_#0a2a90]">Fountain Fill</Fit>
        <div className="mt-[5px] mr-[11px] ml-auto flex h-[46px] w-[46px] items-center justify-center rounded-[6px] border-2 border-white bg-linear-to-br from-[#f09878] via-[#e2582f] to-[#c83808]">
          <svg className="h-[26px] w-[26px]" viewBox="0 0 26 26"><path d="M2 2 L24 24 M24 2 L2 24" stroke="#fff" strokeWidth="5" /></svg>
        </div>
      </div>
      <div className="mr-[6px] ml-[7px] flex grow flex-col bg-[#ece9d8] pl-[25px]">
        <div className="flex h-[308px] shrink-0">
          <div className="w-[318px] shrink-0 pt-[25px]">
            <div className="flex h-[46px] items-center">
              <Fit className="mt-[2px] w-[58px]">Type:</Fit>
              <Combo className="ml-[24px] h-[46px] w-[233px]"><Fit className="mt-[2px] ml-[6px] w-[66px]">Linear</Fit></Combo>
            </div>
            <div className={group + "mt-[26px] h-[181px]"}>
              <Legend className="-mt-[17px]"><Fit className="w-[133px]">Center offset</Fit></Legend>
              <div className="mt-[18px] ml-[18px] flex h-[50px] items-center">
                <div className="w-[142px] shrink-0"><Fit className={"w-[109px] " + off}>Horizontal:</Fit></div>
                <Spin text="0" w="w-[12px]" off />
                <Fit className={"ml-[4px] w-[17px] " + off}>%</Fit>
              </div>
              <div className="mt-[16px] ml-[18px] flex h-[50px] items-center">
                <div className="w-[142px] shrink-0 pt-[2px]"><Fit className={"w-[83px] " + off}>Vertical:</Fit></div>
                <Spin text="0" w="w-[12px]" off />
                <Fit className={"mt-[2px] ml-[4px] w-[17px] " + off}>%</Fit>
              </div>
            </div>
          </div>
          <div className={group + "mt-[25px] ml-[21px] h-[251px] w-[353px]"}>
            <Legend className="-mt-[16px]"><Fit className="w-[79px]">Options</Fit></Legend>
            <div className="mt-[20px] ml-[18px] flex h-[50px] items-center">
              <div className="w-[154px] shrink-0 pb-[6px]"><Fit className="w-[65px]">Angle:</Fit></div>
              <Spin text=".0" w="w-[20px]" />
            </div>
            <div className="mt-[14px] ml-[18px] flex h-[51px] items-center">
              <div className="w-[154px] shrink-0 pt-[2px]"><Fit className={"w-[65px] " + off}>Steps:</Fit></div>
              <Spin text="256" w="w-[39px]" off />
              <div className="mt-[6px] ml-[11px] flex h-[32px] w-[30px] items-center justify-center rounded-[5px] border-2 border-[#234f7e] bg-[#f4f4fa]">
                <Ico className="h-[24px] w-[22px]" vb="0 0 22 24">
                  <path d="M3 12 V9 C3 -1 19 -1 19 9 V12" fill="#d0d0e4" stroke={D} strokeWidth="2.500" /><circle cx="11" cy="8" r="3" fill="#fff" stroke={D} strokeWidth="2" />
                  <path d="M2 12 H20 V23 H2Z" fill="#b4b4dc" /><path d="M2 12 V23 M20 12 V23 M2 12 H20" stroke={D} strokeWidth="2" />
                </Ico>
              </div>
            </div>
            <div className="mt-[17px] ml-[18px] flex h-[51px] items-center">
              <div className="w-[154px] shrink-0 pt-[3px]"><Fit className="w-[107px]">Edge pad:</Fit></div>
              <Spin text="0" w="w-[12px]" />
              <Fit className="ml-[17px] w-[17px]">%</Fit>
            </div>
          </div>
          <div className="mt-[23px] ml-[21px] h-[195px] w-[177px] shrink-0 border-2 border-white border-r-[#2a2a24] border-b-[#2a2a24] py-[4px] pr-[5px] pl-[4px]">
            <div className={"h-[181px] w-[164px] border-2 border-black " + blend} />
          </div>
        </div>
        <div className={group + "h-[327px] w-[890px]"}>
          <Legend className="-mt-[17px]"><Fit className="w-[118px]">Color blend</Fit></Legend>
          <div className="-mt-[1px] flex">
            <div className="w-[551px] shrink-0">
              <div className="mt-[16px] flex h-[30px] items-center pl-[17px]">
                <div className="h-[29px] w-[29px] shrink-0 rounded-full border-[3px] border-[#4a7390] bg-linear-to-br from-[#e4e2da] to-white" />
                <Fit className="mt-[2px] ml-[8px] w-[104px]">Two color</Fit>
                <div className="mt-[3px] ml-[79px] flex h-[29px] w-[29px] shrink-0 items-center justify-center rounded-full border-[3px] border-[#4a7390] bg-[#f6f5f0]"><div className="h-[12px] w-[12px] rounded-full bg-[#2ea52a]" /></div>
                <Fit className="mt-[5px] ml-[7px] w-[78px]">Custom</Fit>
              </div>
              <div className="mt-[24px] flex h-[50px] items-center pl-[18px]">
                <Fit className="mt-[3px] w-[86px]">Position:</Fit>
                <Spin text="0" w="w-[12px]" className="ml-[29px]" />
                <Fit className="mt-[4px] ml-[3px] w-[15px]">%</Fit>
                <Fit className="mt-[3px] ml-[74px] w-[80px]">Current:</Fit>
                <div className="mt-[2px] ml-[14px] h-[40px] w-[81px] shrink-0 border border-[#6a58a0] bg-[#340e6c]" />
              </div>
              <div className="mt-[34px] flex h-[15px] pl-[10px]">
                <div className="h-[14px] w-[14px] shrink-0 bg-black" />
                <Ico className="ml-[240px] h-[15px] w-[28px]" vb="0 0 28 15"><path d="M2 1.500 H26 L14 13.500Z" fill="#fff" stroke="#111" strokeWidth="2" /></Ico>
                <div className="ml-[229px] h-[14px] w-[14px] shrink-0 border-2 border-black bg-white" />
              </div>
              <div className="mt-[3px] ml-[28px] h-[113px] w-[490px] border-[3px] border-[#fbfaf4] border-r-[#2a2a24] border-b-[#2a2a24] pt-[5px] pl-[6px]">
                <div className={"h-[96px] w-[471px] border-2 border-black " + blend} />
              </div>
            </div>
            <div className="pt-[9px]">
              <div className="flex h-[229px]">
                <div className="grid w-[266px] grid-cols-7 grid-rows-6 gap-[2px] border-2 border-[#16140f] bg-[#16140f]">
                  {swatches.map((c, i) => (
                    <div key={c} className={c}>
                      {i === 11 && <div className="-mt-[2px] -ml-[2px] h-[39px] w-[40px] border-[3px] border-[#a9c0cf] bg-white p-[1px]"><div className="h-full w-full border-2 border-dotted border-white bg-[#340e6c]" /></div>}
                    </div>
                  ))}
                </div>
                <div className="ml-[2px] flex w-[34px] flex-col items-center bg-linear-to-r from-[#f4f3ee] to-[#fefefb]">
                  <ScrollBtn dir="up" className="mt-[1px] h-[35px] w-[33px]" />
                  <div className="mt-[4px] flex h-[36px] w-[33px] flex-col items-center justify-center gap-[3px] rounded-[4px] border-2 border-white bg-[#bfd1fc] shadow-[1px_2px_0_0_#9dbbe8]">
                    <div className="h-[2px] w-[14px] bg-[#e4ecff]" /><div className="h-[2px] w-[14px] bg-[#e4ecff]" /><div className="h-[2px] w-[14px] bg-[#e4ecff]" /><div className="h-[2px] w-[14px] bg-[#e4ecff]" />
                  </div>
                  <ScrollBtn dir="down" className="mt-auto mb-[2px] h-[34px] w-[33px]" />
                </div>
              </div>
              <Btn className="mt-[13px] ml-[77px] w-[162px]"><Fit className="w-[69px]">Others</Fit></Btn>
            </div>
          </div>
        </div>
        <div className="mt-[25px] flex h-[46px] shrink-0 items-center">
          <Fit className="mb-[6px] w-[83px]">Presets:</Fit>
          <Combo className="ml-[9px] h-[46px] w-[305px]" />
          <div className="ml-[18px] flex h-[41px] w-[42px] shrink-0 items-center justify-center rounded-[6px] border-2 border-[#234f7e] bg-linear-to-b from-white to-[#eceae2]">
            <Ico className="h-[24px] w-[24px]" vb="0 0 24 24"><path d="M8.500 1.500 H15.500 V8.500 H22.500 V15.500 H15.500 V22.500 H8.500 V15.500 H1.500 V8.500 H8.500Z" fill="#d4d4f0" stroke={D} strokeWidth="2.500" /></Ico>
          </div>
          <div className="ml-[5px] flex h-[41px] w-[42px] shrink-0 items-center justify-center rounded-[6px] border-2 border-[#234f7e] bg-[#f6f4ec] shadow-[inset_0_0_0_4px_#f6b744]">
            <Ico className="h-[11px] w-[24px]" vb="0 0 24 11"><path d="M1.500 1.500 H22.500 V9.500 H1.500Z" fill="#c4c4e8" stroke={D} strokeWidth="2.500" /></Ico>
          </div>
          <div className="ml-[66px] flex h-[46px] w-[313px] shrink-0 items-center justify-center rounded-[6px] border-2 border-[#cbc9b8] bg-[#f4f3ea] pt-[2px] pr-[2px] text-[#a5a394]"><Fit className="w-[212px]">PostScript Options...</Fit></div>
        </div>
        <div className="mt-[29px] ml-[370px] flex h-[48px] shrink-0">
          <Btn className="w-[162px] shadow-[inset_0_0_0_3px_#a8c2f0,inset_0_-5px_0_0_#7391dc]"><Fit className="w-[34px]">OK</Fit></Btn>
          <Btn className="ml-[16px] w-[162px]"><Fit className="w-[74px]">Cancel</Fit></Btn>
          <Btn className="ml-[13px] w-[163px]"><Fit className="w-[50px]">Help</Fit></Btn>
        </div>
      </div>
    </div>
  );
}

const outline = "[paint-order:stroke_fill] [-webkit-text-stroke:6px_white]";

function Notes() {
  return (
    <>
      <Fit dir="rtl" className={"absolute top-[687px] left-[702px] w-[150px] font-['Liberation_Sans'] text-[36px] font-bold text-[#1f1a17] " + outline}>2 צבעים</Fit>
      <Fit dir="rtl" className={"absolute top-[688px] left-[899px] w-[235px] font-['Liberation_Sans'] text-[36px] font-bold text-[#1f1a17] " + outline}>בחירה אישית</Fit>
      <svg className="absolute top-[720px] left-[648px] h-[154px] w-[486px]" viewBox="648 720 486 154" fill="none" stroke="#2a1266" strokeWidth="8.500" strokeLinecap="round">
        <ellipse cx="766" cy="797" rx="108" ry="66.500" strokeDasharray="9.500 8.100" />
        <ellipse cx="1011" cy="797" rx="108" ry="66.500" strokeDasharray="9.500 8.100" />
      </svg>
    </>
  );
}

/* ---------- status and taskbar ---------- */

function StatusBar() {
  return (
    <div className="flex h-[98px] items-center text-[27px]">
      <div className="flex flex-col gap-[18px]">
        <div className="flex">
          <Fit className="ml-[9px] w-[731px]">{"Width: 70.702  Height: 70.702  Center: (129.282, 140.310)  millimeters"}</Fit>
          <Fit className="ml-[159px] w-[224px]">Rectangle on Layer 1</Fit>
        </div>
        <div className="flex">
          <Fit className="ml-[9px] w-[221px]">( -187.657, 150.671 )</Fit>
          <Fit className="ml-[35px] w-[1022px]">Dbl-click tool creates a page frame; Ctrl+drag constrains to a square; Shift+drag draws from center</Fit>
        </div>
      </div>
      <div className="-mt-[1px] ml-auto flex flex-col gap-[10px]">
        <div className="flex h-[34px] items-center">
          <Ico className="h-[33px] w-[35px]" vb="0 0 35 33">
            <path d="M1 19 L15 8 L29 19 L16 31 L9 32Z" fill={L} stroke={D} strokeWidth="2" /><path d="M11 12 C9 0 17 -1 18 5 V15" stroke={D} strokeWidth="2" /><path d="M20 8 L34 15 V23 L27 17Z" fill={D} />
          </Ico>
          <Fit className="ml-[10px] w-[58px]">None</Fit>
        </div>
        <div className="flex h-[34px] items-center">
          <Nib className="ml-[9px] h-[35px] w-[19px]" />
          <Fit className="ml-[17px] w-[152px]">{"Black  Hairline"}</Fit>
        </div>
      </div>
      <div className="mr-[24px] ml-[176px] flex flex-col gap-[11px]">
        <svg className="h-[34px] w-[67px] bg-white" viewBox="0 0 67 34"><path d="M11 5 L56 29 M56 5 L11 29" stroke="#111" strokeWidth="2.500" /></svg>
        <div className="h-[34px] w-[67px] bg-[#23201c]" />
      </div>
    </div>
  );
}

const Net = ({ className, x }) => (
  <Ico className={className} vb="0 0 34 34">
    <path d="M13 2 H29 V19 H13Z" fill="#2a2c64" stroke="#8a90c0" strokeWidth="2" /><path d="M16 21 H28 L30 26 H16Z" fill="#c8cce4" />
    <path d="M3 9 H20 V25 H3Z" fill="#23285c" stroke="#9aa0cc" strokeWidth="2" /><path d="M3 28 H18 L21 33 H1Z" fill="#d4d8ec" />
    {x && <path d="M18 17 L34 34 M34 17 L18 34" stroke="#f04848" strokeWidth="5" />}
  </Ico>
);

function Taskbar() {
  return (
    <div className="flex h-[67px] items-center overflow-hidden bg-[linear-gradient(180deg,#2f6cc8_0%,#4a90ee_8%,#3a7ee6_20%,#2560dc_40%,#2258d8_60%,#2560e0_88%,#1a44a8_100%)] font-['Noto_Sans'] text-white">
      <div className="flex h-[67px] w-[326px] shrink-0 items-center border-r-2 border-[#0a4890] bg-[linear-gradient(180deg,#1268c8_0%,#1cb0f4_10%,#18a0ee_30%,#1290e8_60%,#149aee_88%,#0c62b8_100%)]">
        <Fit className="ml-[29px] w-[62px] text-[25px]">13:13</Fit>
        <Ico className="ml-[16px] h-[34px] w-[34px]" vb="0 0 34 34"><circle cx="17" cy="17" r="16.500" fill="url(#aball)" /><text x="23" y="27" textAnchor="middle" fontFamily="Liberation Serif" fontWeight="bold" fontSize="32" fill="#fff">a</text></Ico>
        <Ico className="ml-[6px] h-[34px] w-[34px]" vb="0 0 34 34"><circle cx="17" cy="17" r="16" fill="#f83c6c" stroke="#201030" strokeWidth="2" /><text x="17" y="27" textAnchor="middle" fontFamily="Liberation Serif" fontWeight="bold" fontSize="29" fill="#1c10a0" stroke="#1c10a0">M</text></Ico>
        <Net className="ml-[6px] h-[35px] w-[35px]" x />
        <Ico className="ml-[5px] h-[34px] w-[34px]" vb="0 0 34 34">
          <path d="M8 28 C-2 14 8 2 20 3" stroke="#3cb030" strokeWidth="4" /><path d="M10 26 C2 16 9 6 20 5" stroke="#f0e828" strokeWidth="4" /><path d="M9 30 C20 28 12 14 22 7" stroke="#2cc838" strokeWidth="6" />
          <path d="M18 15 C22 6 32 10 31 18" stroke="#d83040" strokeWidth="7" /><path d="M31 16 C31 26 24 32 17 31" stroke="#2868d0" strokeWidth="4" />
        </Ico>
        <Net className="ml-[6px] h-[32px] w-[32px]" />
        <Ico className="relative ml-[5px] h-[42px] w-[42px]" vb="0 0 42 42"><circle cx="21" cy="21" r="20" fill="#1a78e8" stroke="#5ab4f8" strokeWidth="2" /><path d="M9 9 C15 2 27 2 33 9 C30 16 12 16 9 9Z" fill="#62b0fa" opacity="0.7" /><path d="M17 12 L26 21 L17 30" stroke="#fff" strokeWidth="5" /></Ico>
      </div>
      <Tri className="ml-[50px]" />
      <div className="ml-[5px] flex h-[48px] w-[225px] shrink-0 items-center justify-end border-2 border-[#d8d4c0] bg-white pr-[8px]">
        <div className="flex h-[35px] w-[35px] items-center justify-center border-2 border-[#58b070] border-t-[#5878d0] border-r-[#e05848] bg-white font-['Liberation_Sans'] text-[31px] leading-none text-[#5a68b8]">G</div>
      </div>
      <div className="ml-[18px] flex h-[56px] w-[377px] shrink-0 items-center border-2 border-[#0a0c18] bg-[linear-gradient(180deg,#66708a_0%,#454c64_40%,#10131e_52%,#161a28_80%,#343a50_100%)]">
        <Wmp className="ml-[8px] h-[33px] w-[33px]" />
        <div className="ml-[11px] flex h-[44px] w-[290px] shrink-0 items-center rounded-[22px] border-2 border-[#14161f] bg-[linear-gradient(180deg,#565d74_0%,#343a4c_45%,#080a10_52%,#10121c_100%)]">
          <div className="ml-[22px] h-[17px] w-[17px] shrink-0 bg-[#f0f2f6]" />
          <div className="ml-[14px] flex h-[32px] w-[54px] shrink-0 items-center justify-center rounded-l-[6px] border border-[#8090a8] bg-[linear-gradient(180deg,#66788c_0%,#48586c_48%,#18202c_52%,#303c50_100%)]">
            <Ico className="h-[17px] w-[20px]" vb="0 0 20 18"><path d="M2 0 V18" stroke="#fff" strokeWidth="3" /><path d="M20 0 V18 L6 9Z" fill="#fff" /></Ico>
          </div>
          <Ico className="relative h-[50px] w-[49px]" vb="0 0 50 50"><circle cx="25" cy="25" r="24" fill="url(#orb)" stroke="#a8bce4" strokeWidth="1.500" /><path d="M5 22 C8 2 42 2 45 22Z" fill="#a8c0f4" opacity="0.5" /><path d="M19 15 V35 M31 15 V35" stroke="#fff" strokeWidth="6" /></Ico>
          <div className="flex h-[32px] w-[54px] shrink-0 items-center justify-center rounded-r-[6px] border border-[#8090a8] bg-[linear-gradient(180deg,#66788c_0%,#48586c_48%,#18202c_52%,#303c50_100%)]">
            <Ico className="h-[17px] w-[20px]" vb="0 0 20 18"><path d="M18 0 V18" stroke="#fff" strokeWidth="3" /><path d="M0 0 V18 L14 9Z" fill="#fff" /></Ico>
          </div>
          <Ico className="ml-[10px] h-[22px] w-[26px]" vb="0 0 26 22"><path d="M0 7 H5 L11 1 V21 L5 15 H0Z" fill="#fff" /><path d="M15 5 C18 9 18 13 15 17 M19 2 C24 8 24 14 19 20" stroke="#c8ccd4" strokeWidth="3" /></Ico>
          <Ico className="ml-[6px] h-[9px] w-[14px]" vb="0 0 14 9"><path d="M0 0 H14 L7 9Z" fill="#fff" /></Ico>
        </div>
        <div className="ml-[9px] flex flex-col items-center gap-[9px]">
          <Ico className="h-[16px] w-[13px]" vb="0 0 13 16"><path d="M0 6 L6.500 0 L13 6Z M0 10 L6.500 16 L13 10Z" fill="#fff" /></Ico>
          <Ico className="h-[17px] w-[16px]" vb="0 0 16 17"><path d="M5 5 V2 H14.500 V11 H11 M1.500 7 H10.500 V15.500 H1.500Z" stroke="#fff" strokeWidth="2.500" /></Ico>
        </div>
      </div>
      <div className="ml-[16px] flex h-[54px] w-[219px] shrink-0 items-center rounded-[4px] border-2 border-[#14409c] bg-[#1c50b8] text-[25px]">
        <Fit className="mt-[2px] ml-[36px] w-[111px]">...CorelDR</Fit>
        <CorelLogo className="mt-[3px] ml-[13px] h-[30px] w-[33px]" />
      </div>
      <div className="ml-[3px] flex h-[52px] w-[214px] shrink-0 items-center rounded-[4px] bg-[linear-gradient(180deg,#5c9af8_0%,#3c81f3_20%,#3a7df0_85%,#2f68d4_100%)] text-[26px]">
        <Fit className="ml-[34px] w-[115px] font-['DejaVu_Sans'] text-[24px]"><bdo dir="ltr">...+ </bdo><bdi dir="rtl">חנוכה</bdi></Fit>
        <Ico className="ml-[10px] h-[30px] w-[35px]" vb="0 0 35 30"><path d="M2 26 V4 L5 2 H13 L16 6 H30 V12 L33 12 V26 L30 28 H4Z" fill="#f4cc58" stroke="#a87818" strokeWidth="1.500" /><path d="M2 27 L6 12 L33 9 L30 28Z" fill="url(#fold)" stroke="#b08820" /></Ico>
      </div>
      <div className="ml-[6px] flex h-[52px] w-[216px] shrink-0 items-center rounded-[4px] bg-[linear-gradient(180deg,#5c9af8_0%,#3c81f3_20%,#3a7df0_85%,#2f68d4_100%)] text-[25px]">
        <Tri className="ml-[6px]" color="#fff" />
        <Fit className="ml-[31px] w-[76px]">...Inter</Fit>
        <Fit className="ml-[11px] w-[14px] text-[#ffd890]">2</Fit>
        <IE className="ml-[9px] h-[34px] w-[36px]" />
      </div>
      <IE className="ml-[114px] h-[34px] w-[35px]" />
      <Ico className="ml-[17px] h-[35px] w-[35px]" vb="0 0 35 35"><rect x="1.500" y="1.500" width="32" height="32" fill="#fbe6b8" stroke="#e89830" strokeWidth="3" /><circle cx="17.500" cy="17.500" r="10.500" fill="#fff8e4" stroke="#d08828" strokeWidth="3" /><path d="M17 11 V19 H23" stroke="#a86818" strokeWidth="2.500" /></Ico>
      <Wmp className="ml-[17px] h-[34px] w-[34px]" />
      <Ico className="ml-[15px] h-[35px] w-[35px]" vb="0 0 35 35"><path d="M2 6 L10 3 L14 1 L24 3 L31 5 L28 14 L30 26 L24 32 L8 33 L4 24Z" fill="#d4e8fc" stroke="#2a8ad8" strokeWidth="2" /><path d="M9 11 H23 V26 H9Z" fill="#fff" stroke="#1c78c8" strokeWidth="3" /><path d="M14 21 L27 9" stroke="#2a5cb0" strokeWidth="5" /><path d="M27 11 L33 14" stroke="#e05030" strokeWidth="4" /></Ico>
      <div className="ml-auto flex h-[67px] w-[256px] shrink-0 items-center rounded-l-[14px] bg-[linear-gradient(180deg,#2e7a30_0%,#68b060_10%,#4a9e46_24%,#3a9638_50%,#38a034_80%,#2a7828_100%)]">
        <Fit dir="rtl" className="-mb-[2px] ml-[58px] w-[112px] font-['Liberation_Sans'] text-[44px] font-bold italic [text-shadow:2px_3px_1px_#1c4c18]">התחל</Fit>
        <Ico className="mb-[6px] ml-[11px] h-[40px] w-[41px]" vb="0 0 40 40">
          <path d="M7 3 C12 -1 16 0 20 3 L17 18 C12 15 8 15 3 18Z" fill="#f06030" /><path d="M22 5 C28 9 33 9 40 5 L36 21 C30 24 25 23 19 19Z" fill="#8cc838" />
          <path d="M2 20 C7 17 12 17 17 20 L13 36 C9 32 4 32 -1 35Z" fill="#5890f0" /><path d="M19 22 C24 26 29 26 35 23 L31 38 C25 42 20 41 15 37Z" fill="#f8c820" />
        </Ico>
      </div>
    </div>
  );
}

export default function App() {
  return (
    <div className="relative flex h-[1706px] w-[2275px] flex-col overflow-hidden bg-[#ece9d8] font-['Liberation_Sans',sans-serif] text-[#141410]">
      <Defs />
      <TitleBar />
      <MenuBar />
      <Toolbar />
      <div className="flex h-[1357px] shrink-0 border-b-[3px] border-[#fbfaf4]">
        <Toolbox />
        <Workspace />
        <PaletteBar />
      </div>
      <StatusBar />
      <Taskbar />
      <Dialog />
      <Notes />
    </div>
  );
}
